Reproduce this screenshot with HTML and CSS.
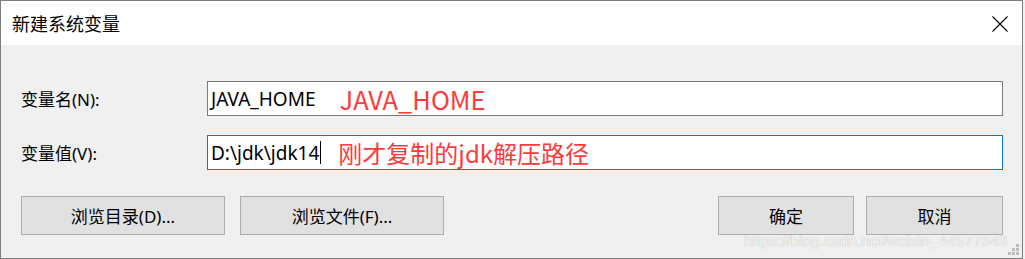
FILE: index.html
```html
<!DOCTYPE html>
<html lang="zh-CN">
<head>
<meta charset="utf-8">
<title>新建系统变量</title>
<link rel="stylesheet" href="styles.css">
</head>
<body>
<div class="window">
  <div class="titlebar">
    <span class="title">新建系统变量</span>
    <span class="close">
      <svg width="16" height="16" viewBox="0 0 16 16"><path d="M0.5 0.5 L15.5 15.5 M15.5 0.5 L0.5 15.5" stroke="#000" stroke-width="1.1" fill="none"/></svg>
    </span>
  </div>
  <div class="content">
    <div class="row">
      <label class="label">变量名(N):</label>
      <div class="field">
        <span class="value">JAVA_HOME</span>
        <span class="note note-name">JAVA_HOME</span>
      </div>
    </div>
    <div class="row">
      <label class="label">变量值(V):</label>
      <div class="field focused">
        <span class="value">D:\jdk\jdk14</span><span class="caret"></span>
        <span class="note note-value">刚才复制的jdk解压路径</span>
      </div>
    </div>
    <div class="buttons">
      <button class="btn btn-wide">浏览目录(D)...</button>
      <button class="btn btn-wide">浏览文件(F)...</button>
      <span class="spacer"></span>
      <button class="btn btn-ok">确定</button>
      <button class="btn btn-cancel">取消</button>
    </div>
  </div>
  <div class="watermark">https://blog.csdn.net/weixin_44577543</div>
  <div class="grip">
    <svg width="12" height="12" viewBox="0 0 12 12" fill="#bdbdbd">
      <rect x="8" y="0" width="3" height="3"/>
      <rect x="4" y="4" width="3" height="3"/><rect x="8" y="4" width="3" height="3"/>
      <rect x="0" y="8" width="3" height="3"/><rect x="4" y="8" width="3" height="3"/><rect x="8" y="8" width="3" height="3"/>
    </svg>
  </div>
</div>
</body>
</html>
```
FILE: styles.css
```css
html, body {
  margin: 0;
  padding: 0;
  background: #f3f3f3;
}
body {
  font-family: "Noto Sans", "Noto Sans CJK SC", sans-serif;
  font-size: 17px;
  color: #000;
}
.window {
  position: relative;
  width: 1023px;
  height: 259px;
  box-sizing: border-box;
  border: 1px solid #7d7d7d;
  background: #f0f0f0;
  display: flex;
  flex-direction: column;
}
.titlebar {
  height: 44px;
  background: #fff;
  display: flex;
  align-items: center;
  justify-content: space-between;
  padding-left: 11px;
  padding-right: 14px;
}
.title {
  font-family: "Noto Sans CJK SC", sans-serif;
  font-size: 18px;
  line-height: 20px;
  margin-top: -1px;
}
.close {
  display: flex;
  width: 16px;
  height: 16px;
  margin-top: 1px;
}
.content {
  padding: 36px 19px 0 20px;
  display: flex;
  flex-direction: column;
}
.row {
  display: flex;
  align-items: center;
  height: 35px;
  margin-bottom: 19px;
}
.label {
  width: 186px;
  flex: none;
  line-height: 20px;
  margin-top: 2px;
}
.field {
  flex: 1;
  height: 35px;
  box-sizing: border-box;
  border: 1px solid #7a7a7a;
  background: #fff;
  display: flex;
  align-items: center;
  padding-left: 3px;
  line-height: 22px;
}
.field.focused {
  border-color: #0078d7;
}
.value {
  white-space: pre;
  font-size: 19px;
}
.caret {
  display: inline-block;
  width: 1px;
  height: 23px;
  background: #000;
  margin-left: 1px;
}
.note {
  font-family: "Noto Sans CJK SC", sans-serif;
  color: #fd3b3b;
  font-size: 24px;
  line-height: 28px;
  white-space: nowrap;
}
.note-name {
  margin-left: 24px;
  font-size: 25.5px;
}
.note-value {
  margin-left: 17px;
}
.buttons {
  display: flex;
  margin-top: 7px;
}
.btn {
  height: 39px;
  box-sizing: border-box;
  border: 1px solid #adadad;
  background: #e1e1e1;
  font-family: "Noto Sans", "Noto Sans CJK SC", sans-serif;
  font-size: 17px;
  color: #000;
  padding: 0;
  margin: 0;
}
.btn-wide {
  width: 204px;
  margin-right: 15px;
}
.spacer {
  flex: 1;
}
.btn-ok {
  width: 136px;
  margin-right: 12px;
}
.btn-cancel {
  width: 137px;
}
.watermark {
  position: absolute;
  left: 743px;
  top: 231px;
  font-family: "Liberation Sans", sans-serif;
  font-size: 15.5px;
  line-height: 18px;
  color: rgba(255, 255, 255, 0.85);
  text-shadow: 0 0 1px rgba(120, 120, 120, 0.6);
  white-space: nowrap;
}
.grip {
  position: absolute;
  right: 2px;
  bottom: 2px;
  display: flex;
}
```
